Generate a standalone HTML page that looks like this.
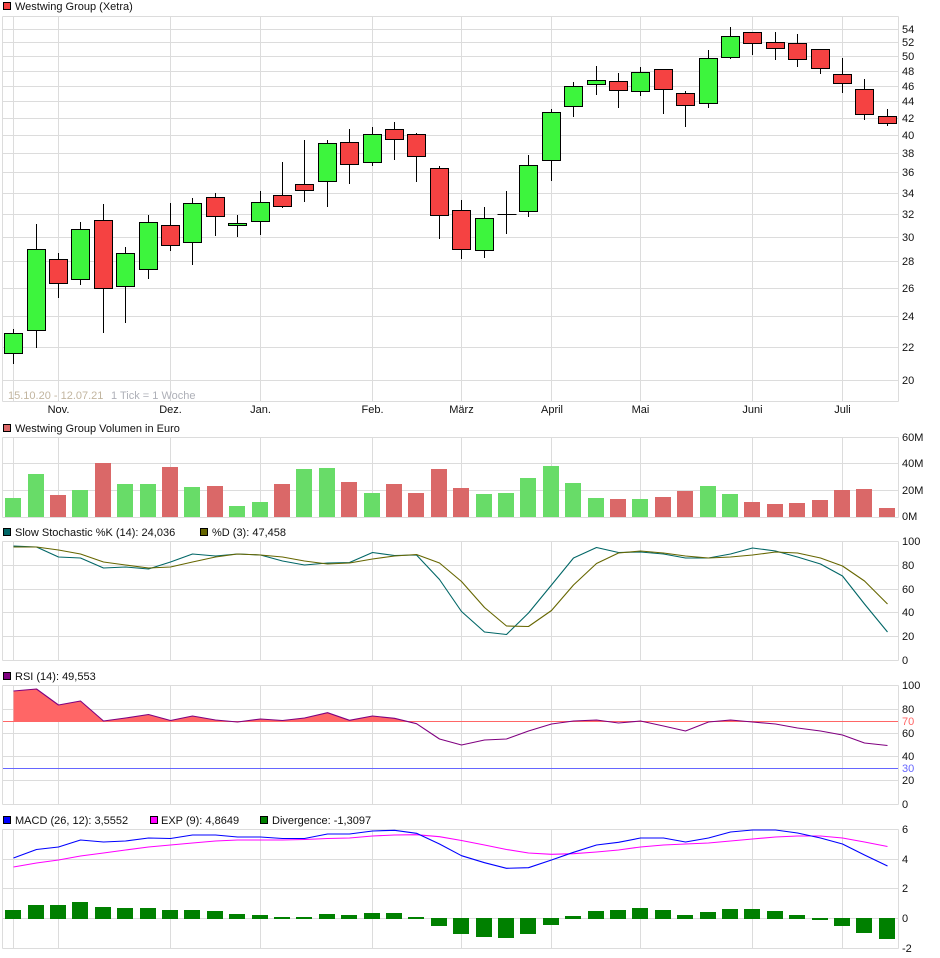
<!DOCTYPE html>
<html lang="de">
<head>
<meta charset="utf-8">
<title>Westwing Group Chart</title>
<style>
html,body{margin:0;padding:0;background:#fff;width:940px;height:958px;overflow:hidden}
svg{display:block}
text{font-family:"Liberation Sans",sans-serif;font-size:11px;fill:#111}
.g{fill:none;stroke:#dcdcdc;stroke-width:1;shape-rendering:crispEdges}
.c{shape-rendering:crispEdges}
.l{fill:none;stroke-width:1.1;stroke-linejoin:round}
.m{text-anchor:middle}
</style>
</head>
<body>
<svg width="940" height="958" viewBox="0 0 940 958" xmlns="http://www.w3.org/2000/svg">
<defs><clipPath id="r70"><rect x="0" y="680" width="900" height="41.5"/></clipPath></defs>
<rect width="940" height="958" fill="#fff"/>

<!-- grid -->
<path class="g" d="M2.5 16.5H898.5M2.5 29.5H898.5M2.5 42.5H898.5M2.5 56.5H898.5M2.5 71.5H898.5M2.5 86.5H898.5M2.5 101.5H898.5M2.5 118.5H898.5M2.5 135.5H898.5M2.5 153.5H898.5M2.5 172.5H898.5M2.5 193.5H898.5M2.5 214.5H898.5M2.5 237.5H898.5M2.5 261.5H898.5M2.5 288.5H898.5M2.5 316.5H898.5M2.5 347.5H898.5M2.5 380.5H898.5M2.5 401.5H898.5
M2.5 16.5V401.5M13.5 16.5V401.5M58.5 16.5V401.5M170.5 16.5V401.5M260.5 16.5V401.5M372.5 16.5V401.5M461.5 16.5V401.5M551.5 16.5V401.5M640.5 16.5V401.5M752.5 16.5V401.5M842.5 16.5V401.5M898.5 16.5V401.5"/>
<path class="g" d="M2.5 437.5H898.5M2.5 463.5H898.5M2.5 490.5H898.5M2.5 517.5H898.5
M2.5 437.5V517.5M13.5 437.5V517.5M58.5 437.5V517.5M170.5 437.5V517.5M260.5 437.5V517.5M372.5 437.5V517.5M461.5 437.5V517.5M551.5 437.5V517.5M640.5 437.5V517.5M752.5 437.5V517.5M842.5 437.5V517.5M898.5 437.5V517.5"/>
<path class="g" d="M2.5 541.5H898.5M2.5 565.5H898.5M2.5 589.5H898.5M2.5 612.5H898.5M2.5 636.5H898.5M2.5 660.5H898.5
M2.5 541.5V660.5M13.5 541.5V660.5M58.5 541.5V660.5M170.5 541.5V660.5M260.5 541.5V660.5M372.5 541.5V660.5M461.5 541.5V660.5M551.5 541.5V660.5M640.5 541.5V660.5M752.5 541.5V660.5M842.5 541.5V660.5M898.5 541.5V660.5"/>
<path class="g" d="M2.5 685.5H898.5M2.5 709.5H898.5M2.5 733.5H898.5M2.5 756.5H898.5M2.5 780.5H898.5M2.5 804.5H898.5
M2.5 685.5V804.5M13.5 685.5V804.5M58.5 685.5V804.5M170.5 685.5V804.5M260.5 685.5V804.5M372.5 685.5V804.5M461.5 685.5V804.5M551.5 685.5V804.5M640.5 685.5V804.5M752.5 685.5V804.5M842.5 685.5V804.5M898.5 685.5V804.5"/>
<path class="g" d="M2.5 829.5H898.5M2.5 859.5H898.5M2.5 888.5H898.5M2.5 918.5H898.5M2.5 948.5H898.5
M2.5 829.5V948.5M13.5 829.5V948.5M58.5 829.5V948.5M170.5 829.5V948.5M260.5 829.5V948.5M372.5 829.5V948.5M461.5 829.5V948.5M551.5 829.5V948.5M640.5 829.5V948.5M752.5 829.5V948.5M842.5 829.5V948.5M898.5 829.5V948.5"/>

<!-- candles: wicks -->
<path class="c" fill="none" stroke="#000" d="M13.5 329V364M36.5 224V348M58.5 253V298M80.5 222V285M103.5 204V333M125.5 247V323M148.5 215V279M170.5 203V251M192.5 198V265M215.5 193V236M237.5 215V237M260.5 191V235M282.5 162V208M304.5 140V202M327.5 140V207M349.5 129V184M372.5 127V166M394.5 122V160M416.5 133V182M439.5 166V239M461.5 200V259M484.5 207V258M506.5 191V234M528.5 155V217M551.5 109V181M573.5 82V117M596.5 66V95M618.5 73V108M640.5 67V96M663.5 69V114M685.5 91V127M708.5 50V108M730.5 27V59M752.5 32V55M775.5 32V60M797.5 34V67M820.5 49V74M842.5 58V93M864.5 79V120M887.5 109V126"/>
<!-- candles: green bodies -->
<path class="c" fill="#3df53d" stroke="#000" d="M4.5 333.5h18v20h-18zM27.5 249.5h18v81h-18zM71.5 229.5h18v50h-18zM116.5 253.5h18v33h-18zM139.5 222.5h18v47h-18zM183.5 203.5h18v39h-18zM228.5 223.5h18v2h-18zM251.5 202.5h18v19h-18zM318.5 143.5h18v38h-18zM363.5 134.5h18v28h-18zM475.5 218.5h18v32h-18zM497.5 214.5h19M519.5 165.5h18v46h-18zM542.5 112.5h18v48h-18zM564.5 86.5h18v20h-18zM587.5 80.5h18v4h-18zM631.5 72.5h18v19h-18zM699.5 58.5h18v45h-18zM721.5 36.5h18v21h-18z"/>
<!-- candles: red bodies -->
<path class="c" fill="#f54242" stroke="#000" d="M49.5 259.5h18v24h-18zM94.5 220.5h18v68h-18zM161.5 225.5h18v20h-18zM206.5 197.5h18v19h-18zM273.5 195.5h18v11h-18zM295.5 184.5h18v6h-18zM340.5 142.5h18v22h-18zM385.5 129.5h18v10h-18zM407.5 134.5h18v22h-18zM430.5 168.5h18v47h-18zM452.5 210.5h18v39h-18zM609.5 81.5h18v9h-18zM654.5 69.5h18v20h-18zM676.5 93.5h18v12h-18zM743.5 32.5h18v11h-18zM766.5 42.5h18v6h-18zM788.5 43.5h18v16h-18zM811.5 49.5h18v19h-18zM833.5 74.5h18v9h-18zM855.5 89.5h18v25h-18zM878.5 116.5h18v7h-18z"/>

<!-- axis main -->
<g>
<text x="902" y="33">54</text><text x="902" y="46">52</text><text x="902" y="60">50</text><text x="902" y="75">48</text><text x="902" y="90">46</text><text x="902" y="105">44</text><text x="902" y="122">42</text><text x="902" y="139">40</text><text x="902" y="157">38</text><text x="902" y="176">36</text><text x="902" y="197">34</text><text x="902" y="218">32</text><text x="902" y="241">30</text><text x="902" y="265">28</text><text x="902" y="292">26</text><text x="902" y="320">24</text><text x="902" y="351">22</text><text x="902" y="384">20</text>
</g>
<text x="8" y="399" style="fill:#c2b59f">15.10.20 - 12.07.21</text>
<text x="111" y="399" style="fill:#aeb0b8">1 Tick = 1 Woche</text>
<g class="m">
<text class="m" x="58.5" y="413">Nov.</text><text class="m" x="170.5" y="413">Dez.</text><text class="m" x="260.5" y="413">Jan.</text><text class="m" x="372.5" y="413">Feb.</text><text class="m" x="461.5" y="413">März</text><text class="m" x="552" y="413">April</text><text class="m" x="640.5" y="413">Mai</text><text class="m" x="752.5" y="413">Juni</text><text class="m" x="842.5" y="413">Juli</text>
</g>

<!-- legends -->
<rect class="c" x="3.5" y="2.5" width="7" height="7" fill="#f54242" stroke="#000"/>
<text x="15" y="10">Westwing Group (Xetra)</text>
<rect class="c" x="3.5" y="424.5" width="7" height="7" fill="#db6868" stroke="#000"/>
<text x="15" y="432">Westwing Group Volumen in Euro</text>
<rect class="c" x="3.5" y="528.5" width="7" height="7" fill="#006666" stroke="#000"/>
<text x="15" y="536">Slow Stochastic %K (14): 24,036</text>
<rect class="c" x="200.5" y="528.5" width="7" height="7" fill="#666600" stroke="#000"/>
<text x="212" y="536">%D (3): 47,458</text>
<rect class="c" x="3.5" y="672.5" width="7" height="7" fill="#800080" stroke="#000"/>
<text x="15" y="680">RSI (14): 49,553</text>
<rect class="c" x="3.5" y="816.5" width="7" height="7" fill="#0000ff" stroke="#000"/>
<text x="15" y="824">MACD (26, 12): 3,5552</text>
<rect class="c" x="150.5" y="816.5" width="7" height="7" fill="#ff00ff" stroke="#000"/>
<text x="161" y="824">EXP (9): 4,8649</text>
<rect class="c" x="260.5" y="816.5" width="7" height="7" fill="#008000" stroke="#000"/>
<text x="272" y="824">Divergence: -1,3097</text>

<!-- volume -->
<path class="c" fill="#68dc68" d="M5 498h16v19h-16zM28 474h16v43h-16zM72 490h16v27h-16zM117 484h16v33h-16zM140 484h16v33h-16zM184 487h16v30h-16zM229 506h16v11h-16zM252 502h16v15h-16zM296 469h16v48h-16zM319 468h16v49h-16zM364 493h16v24h-16zM476 494h16v23h-16zM498 493h16v24h-16zM520 478h16v39h-16zM543 466h16v51h-16zM565 483h16v34h-16zM588 498h16v19h-16zM632 499h16v18h-16zM700 486h16v31h-16zM722 494h16v23h-16z"/>
<path class="c" fill="#da6868" d="M50 495h16v22h-16zM95 463h16v54h-16zM162 467h16v50h-16zM207 486h16v31h-16zM274 484h16v33h-16zM341 482h16v35h-16zM386 484h16v33h-16zM408 493h16v24h-16zM431 469h16v48h-16zM453 488h16v29h-16zM610 499h16v18h-16zM655 497h16v20h-16zM677 491h16v26h-16zM744 502h16v15h-16zM767 504h16v13h-16zM789 503h16v14h-16zM812 500h16v17h-16zM834 490h16v27h-16zM856 489h16v28h-16zM879 508h16v9h-16z"/>
<text x="902" y="441">60M</text><text x="902" y="467">40M</text><text x="902" y="494">20M</text><text x="902" y="520">0M</text>

<!-- stochastic -->
<polyline class="l" stroke="#006666" points="13.5,546 36.5,547 58.5,557 80.5,558 103.5,568 125.5,567 148.5,569 170.5,562 192.5,554 215.5,556 237.5,554 260.5,555 282.5,561 304.5,565 327.5,563 349.5,562.5 372.5,552.5 394.5,555.5 416.5,555 439.5,579.5 461.5,611.5 484.5,632 506.5,634.5 528.5,613 551.5,585 573.5,558 596.5,547.5 618.5,552.5 640.5,552 663.5,554 685.5,558 708.5,558 730.5,554 752.5,548 775.5,551 797.5,557 820.5,564 842.5,576 864.5,604 887.5,632"/>
<polyline class="l" stroke="#666600" points="13.5,547 36.5,547 58.5,550 80.5,554 103.5,562 125.5,565 148.5,568 170.5,567 192.5,562 215.5,557 237.5,554 260.5,555 282.5,557 304.5,561 327.5,564 349.5,563 372.5,559 394.5,556 416.5,554.5 439.5,563 461.5,581.5 484.5,607.5 506.5,626 528.5,626.5 551.5,610.5 573.5,585 596.5,563.5 618.5,553 640.5,551 663.5,553 685.5,556 708.5,558 730.5,557 752.5,555 775.5,552 797.5,553 820.5,558 842.5,566 864.5,581 887.5,604"/>
<text x="902" y="545">100</text><text x="902" y="569">80</text><text x="902" y="593">60</text><text x="902" y="616">40</text><text x="902" y="640">20</text><text x="902" y="664">0</text>

<!-- RSI -->
<polygon clip-path="url(#r70)" fill="#ff6666" points="13.5,722 13.5,691 36.5,689 58.5,705 80.5,701 103.5,721 125.5,718 148.5,714.5 170.5,720.5 192.5,716 215.5,720 237.5,722 260.5,719 282.5,720.5 304.5,718 327.5,712.7 349.5,720.3 372.5,716 394.5,718.3 416.5,723.7 439.5,739 461.5,745 484.5,740 506.5,739 528.5,731 551.5,724 573.5,721 596.5,720 618.5,723 640.5,721 663.5,726 685.5,731 708.5,722 730.5,720 752.5,722 887.5,722"/>
<path class="c" fill="none" stroke="#ff6666" d="M3 721.5H898"/>
<path class="c" fill="none" stroke="#6666ff" d="M3 768.5H898"/>
<polyline class="l" stroke="#800080" points="13.5,691 36.5,689 58.5,705 80.5,701 103.5,721 125.5,718 148.5,714.5 170.5,720.5 192.5,716 215.5,720 237.5,722 260.5,719 282.5,720.5 304.5,718 327.5,712.7 349.5,720.3 372.5,716 394.5,718.3 416.5,723.7 439.5,739 461.5,745 484.5,740 506.5,739 528.5,731 551.5,724 573.5,721 596.5,720 618.5,723 640.5,721 663.5,726 685.5,731 708.5,722 730.5,720 752.5,722 775.5,724 797.5,728 820.5,731 842.5,735 864.5,743 887.5,745.5"/>
<text x="902" y="689">100</text><text x="902" y="713">80</text><text x="902" y="737">60</text><text x="902" y="760">40</text><text x="902" y="784">20</text><text x="902" y="808">0</text>
<text x="902" y="725" style="fill:#ff6666">70</text><text x="902" y="772" style="fill:#6666ff">30</text>

<!-- MACD -->
<path class="c" fill="#008000" d="M5 910h16v9h-16zM28 905h16v14h-16zM50 905h16v14h-16zM72 902h16v17h-16zM95 907h16v12h-16zM117 908h16v11h-16zM140 908h16v11h-16zM162 910h16v9h-16zM184 910h16v9h-16zM207 911h16v8h-16zM229 914h16v5h-16zM252 915h16v4h-16zM274 917h16v2h-16zM296 917h16v2h-16zM319 914h16v5h-16zM341 915h16v4h-16zM364 913h16v6h-16zM386 913h16v6h-16zM408 917h16v2h-16zM431 918h16v8h-16zM453 918h16v16h-16zM476 918h16v19h-16zM498 918h16v20h-16zM520 918h16v16h-16zM543 918h16v7h-16zM565 916h16v3h-16zM588 911h16v8h-16zM610 910h16v9h-16zM632 908h16v11h-16zM655 910h16v9h-16zM677 915h16v4h-16zM700 912h16v7h-16zM722 909h16v10h-16zM744 909h16v10h-16zM767 911h16v8h-16zM789 915h16v4h-16zM812 918h16v2h-16zM834 918h16v8h-16zM856 918h16v15h-16zM879 918h16v21h-16z"/>
<polyline class="l" stroke="#ff00ff" points="13.5,867 36.5,863 58.5,860 80.5,856 103.5,853 125.5,850 148.5,847 170.5,845 192.5,843 215.5,841 237.5,840 260.5,840 282.5,840 304.5,839.5 327.5,838.5 349.5,838 372.5,836 394.5,835 416.5,834.7 439.5,836.7 461.5,840.5 484.5,845 506.5,849.5 528.5,853 551.5,854.3 573.5,853.7 596.5,852 618.5,850 640.5,847 663.5,845 685.5,844 708.5,843 730.5,841 752.5,839 775.5,837 797.5,836 820.5,836 842.5,838 864.5,842 887.5,846.5"/>
<polyline class="l" stroke="#0000ff" points="13.5,858 36.5,849.5 58.5,847 80.5,840 103.5,842 125.5,841 148.5,838 170.5,838.5 192.5,835 215.5,835 237.5,837 260.5,837 282.5,838.5 304.5,838.5 327.5,834 349.5,834 372.5,831 394.5,830.3 416.5,833.3 439.5,844 461.5,855.7 484.5,862.7 506.5,868.3 528.5,867.7 551.5,860 573.5,852.3 596.5,845 618.5,842.3 640.5,838 663.5,838 685.5,842 708.5,838 730.5,832 752.5,830 775.5,830 797.5,833 820.5,838 842.5,844 864.5,855 887.5,866"/>
<text x="902" y="833">6</text><text x="902" y="863">4</text><text x="902" y="892">2</text><text x="902" y="922">0</text><text x="902" y="952">-2</text>
</svg>
</body>
</html>
